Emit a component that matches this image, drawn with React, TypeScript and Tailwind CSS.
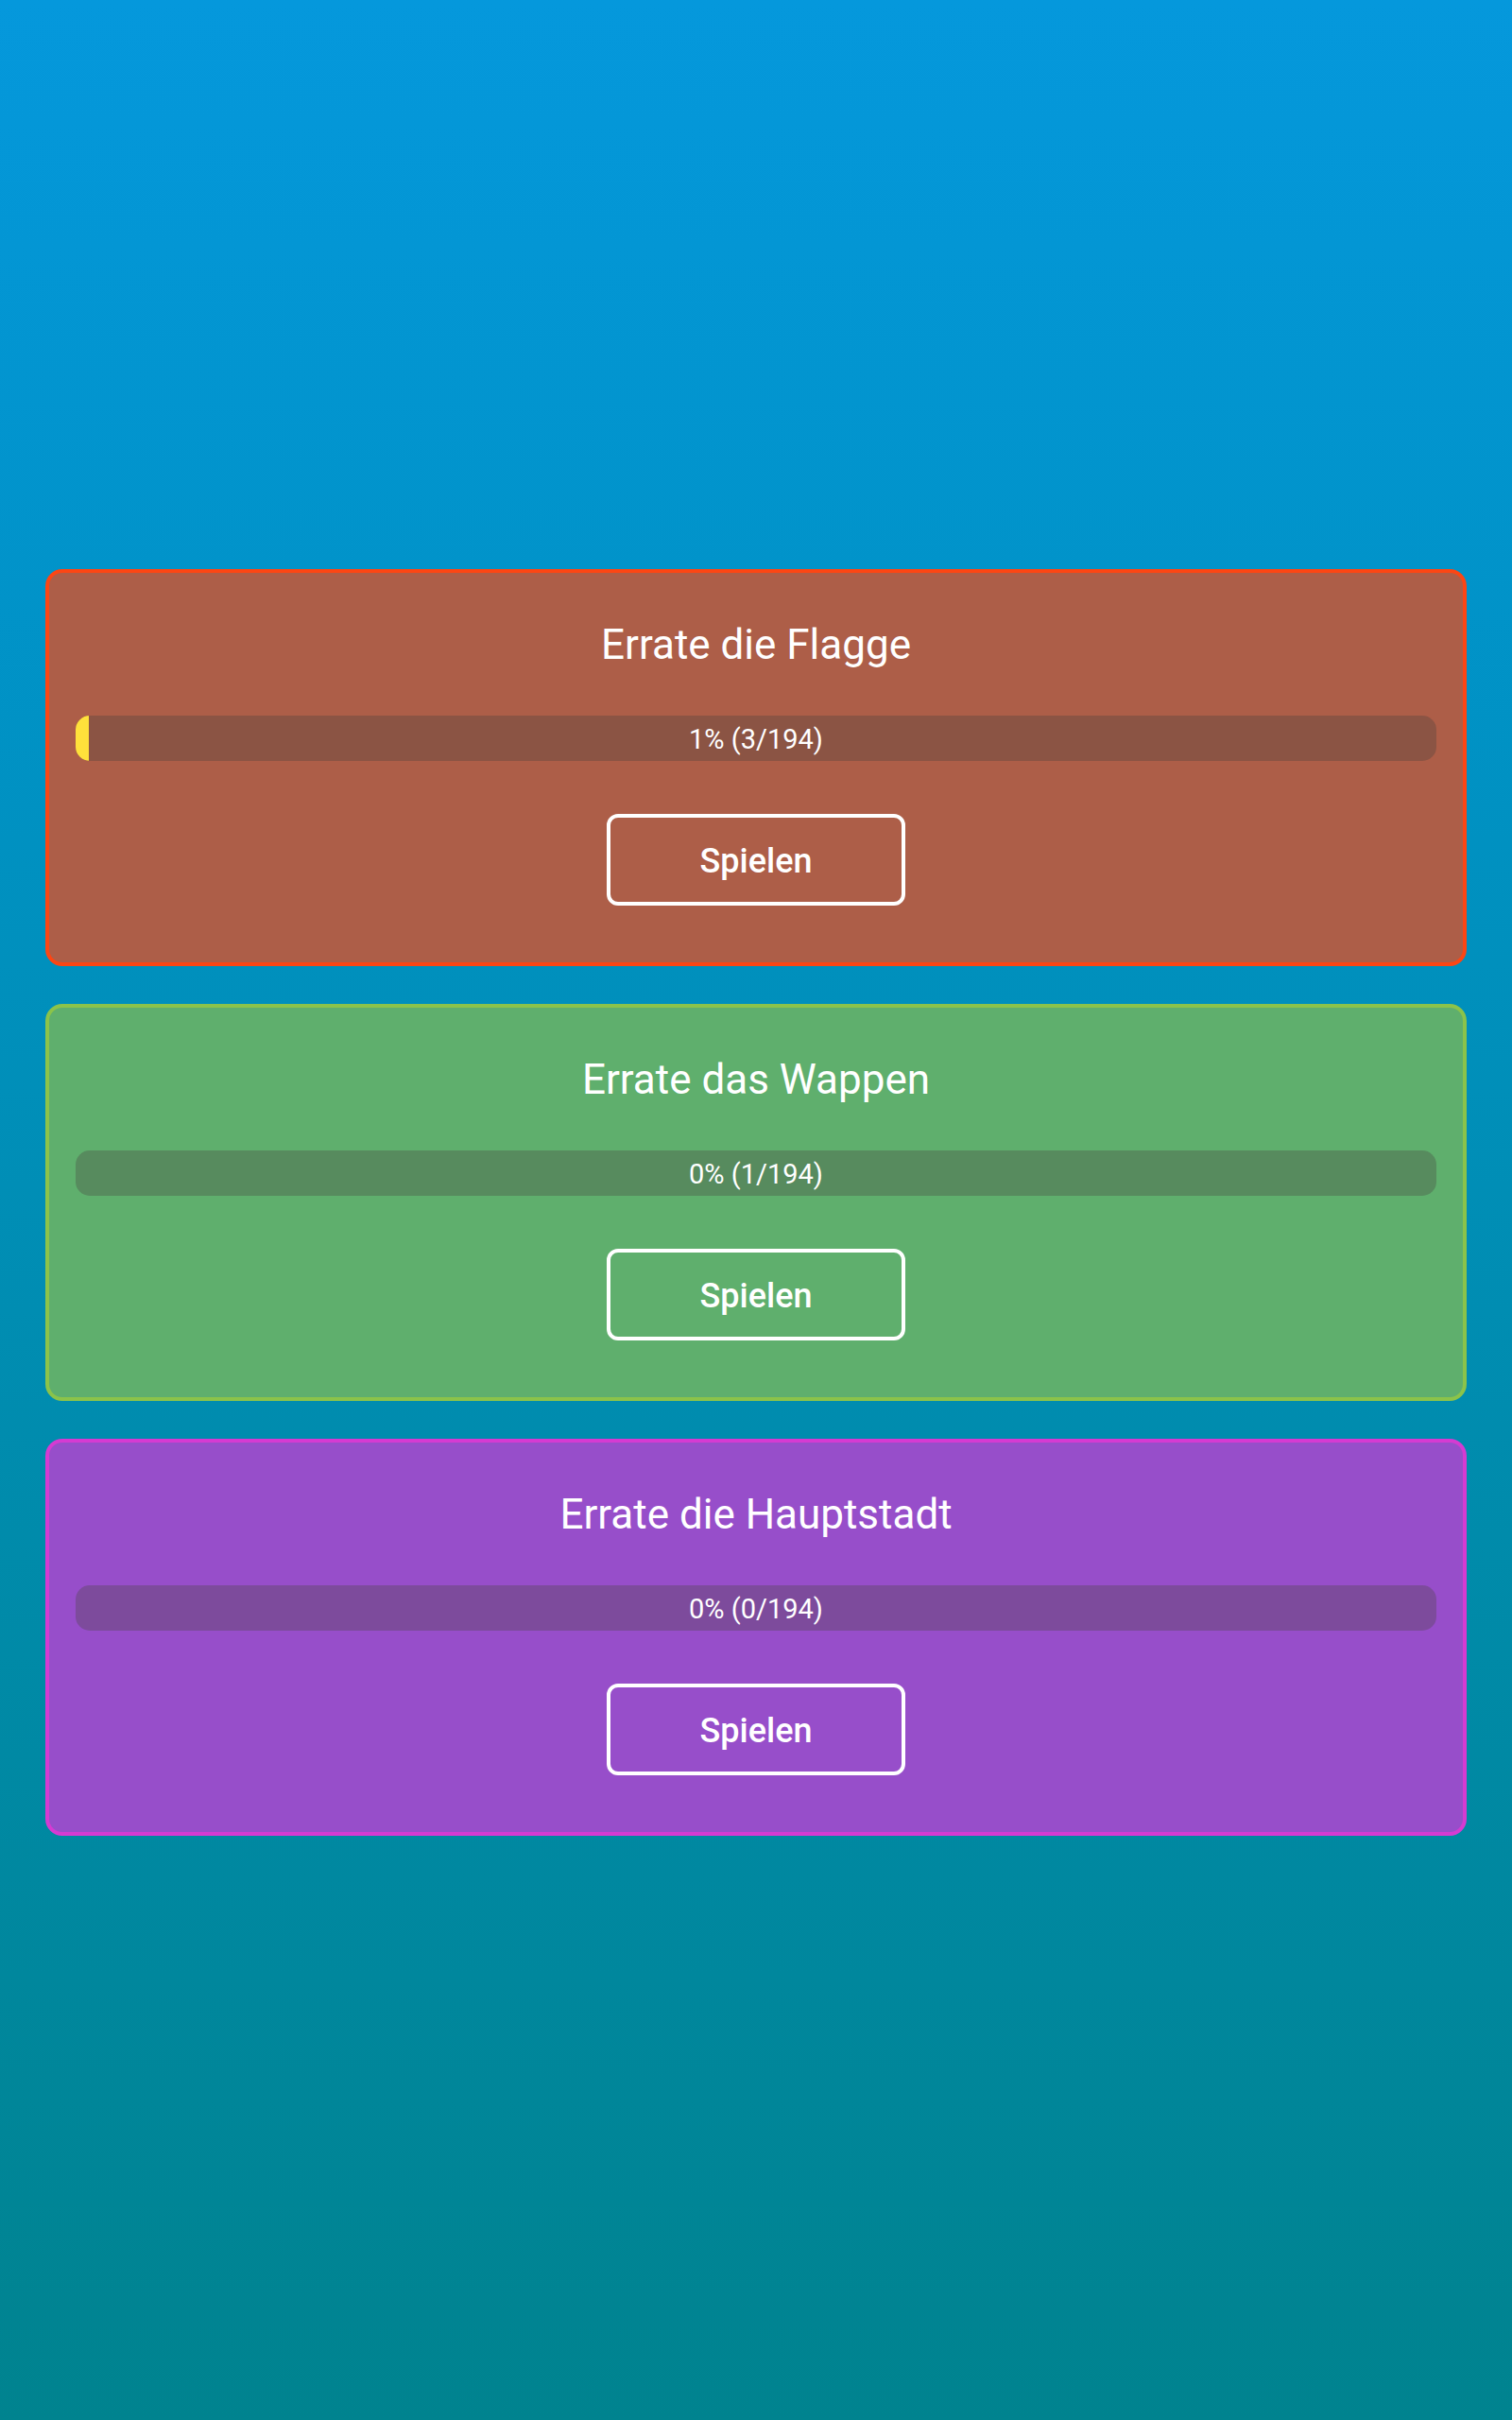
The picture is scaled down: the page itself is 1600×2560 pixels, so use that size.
import React from "react";

type Mode = {
  title: string;
  label: string;
  pct: number;
  card: string;
  track: string;
};

const modes: Mode[] = [
  {
    title: "Errate die Flagge",
    label: "1% (3/194)",
    pct: 1,
    card: "bg-[#ad5e48] border-[#fc4614]",
    track: "bg-[#8b5444]",
  },
  {
    title: "Errate das Wappen",
    label: "0% (1/194)",
    pct: 0,
    card: "bg-[#5faf6d] border-[#8bc34a]",
    track: "bg-[#578b5e]",
  },
  {
    title: "Errate die Hauptstadt",
    label: "0% (0/194)",
    pct: 0,
    card: "bg-[#974eca] border-[#d53bd2]",
    track: "bg-[#7d4b9c]",
  },
];

function Card({ m }: { m: Mode }) {
  return (
    <div className={`rounded-[18px] border-[4px] p-[28px] flex flex-col items-stretch ${m.card}`}>
      <div className="mt-[23px] text-center text-white text-[44px] leading-[51px] font-normal">
        {m.title}
      </div>
      <div className={`relative mt-[49px] h-[48px] rounded-[15px] overflow-hidden ${m.track}`}>
        {m.pct > 0 && (
          <div
            className="absolute left-0 top-0 h-full bg-[#ffe13b]"
            style={{ width: `${m.pct}%` }}
          />
        )}
        <div className="relative flex h-full items-center justify-center pt-[2px] text-white text-[29px] leading-none">
          {m.label}
        </div>
      </div>
      <div className="mt-[56px] mb-[32px] flex justify-center">
        <button className="w-[316px] h-[97px] rounded-[12px] border-[4px] border-white pt-[3px] text-white text-[36px] font-medium flex items-center justify-center">
          Spielen
        </button>
      </div>
    </div>
  );
}

export default function App() {
  return (
    <div
      className="w-full min-h-[2560px] bg-gradient-to-b from-[#0598dc] to-[#00838f] px-[48px] pt-[602px] flex flex-col gap-[40px]"
      style={{ fontFamily: "Roboto, 'Noto Sans', sans-serif" }}
    >
      {modes.map((m) => (
        <Card key={m.title} m={m} />
      ))}
    </div>
  );
}
